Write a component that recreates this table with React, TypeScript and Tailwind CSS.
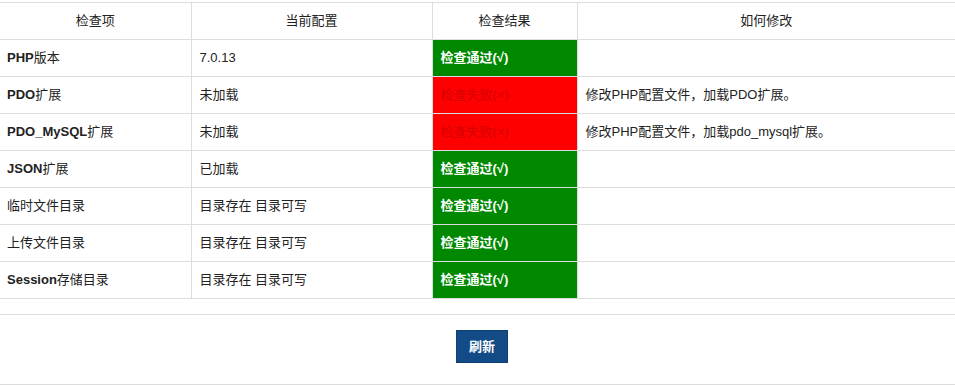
import React from "react";

type Row = { name: [string, string]; value: string; ok: boolean; fix: string };

const rows: Row[] = [
  { name: ["PHP", "版本"], value: "7.0.13", ok: true, fix: "" },
  { name: ["PDO", "扩展"], value: "未加载", ok: false, fix: "修改PHP配置文件，加载PDO扩展。" },
  { name: ["PDO_MySQL", "扩展"], value: "未加载", ok: false, fix: "修改PHP配置文件，加载pdo_mysql扩展。" },
  { name: ["JSON", "扩展"], value: "已加载", ok: true, fix: "" },
  { name: ["", "临时文件目录"], value: "目录存在 目录可写", ok: true, fix: "" },
  { name: ["", "上传文件目录"], value: "目录存在 目录可写", ok: true, fix: "" },
  { name: ["Session", "存储目录"], value: "目录存在 目录可写", ok: true, fix: "" },
];

export default function App() {
  return (
    <div
      className="w-[955px] h-[386px] bg-white text-[#222] text-[13px] overflow-hidden"
      style={{ fontFamily: '"Liberation Sans", "Noto Sans CJK SC", sans-serif' }}
    >
      <div className="pt-[2px]">
        <table className="w-full table-fixed border-collapse">
          <colgroup>
            <col className="w-[191px]" />
            <col className="w-[241px]" />
            <col className="w-[145px]" />
            <col />
          </colgroup>
          <thead>
            <tr className="h-[37px]">
              {["检查项", "当前配置", "检查结果", "如何修改"].map((h, i) => (
                <th
                  key={h}
                  className={`font-normal text-center px-2 py-0 border-y border-[#dddddd] ${i > 0 ? "border-l" : ""}`}
                >
                  {h}
                </th>
              ))}
            </tr>
          </thead>
          <tbody>
            {rows.map((r) => (
              <tr key={r.name.join("")} className="h-[37px]">
                <td className="pl-[7px] pr-2 py-0 border-b border-[#dddddd]">
                  <span className="font-bold">{r.name[0]}</span>
                  <span>{r.name[1]}</span>
                </td>
                <td className="px-2 py-0 border-b border-l border-[#dddddd]">{r.value}</td>
                {r.ok ? (
                  <td className="px-2 py-0 border-b border-l border-[#dddddd] bg-[#008800] text-white font-bold">
                    检查通过(√)
                  </td>
                ) : (
                  <td className="px-2 py-0 border-b border-l border-[#dddddd] bg-[#ff0000] text-[#d40000]">
                    检查失败(×)
                  </td>
                )}
                <td className="px-2 py-0 border-b border-l border-[#dddddd]">{r.fix}</td>
              </tr>
            ))}
          </tbody>
        </table>
      </div>
      <div className="mt-[15px] border-t border-b border-[#dddddd] pt-[15px] pb-[21px] pl-[456px]">
        <button className="w-[52px] h-[33px] bg-[#134b87] border border-[#0f3f73] text-white text-[13px] font-bold">
          刷新
        </button>
      </div>
    </div>
  );
}
